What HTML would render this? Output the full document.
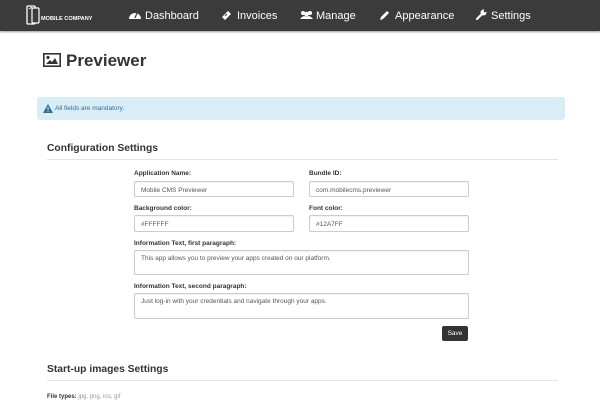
<!DOCTYPE html>
<html><head><meta charset="utf-8"><style>
*{box-sizing:border-box;margin:0;padding:0}
body{width:600px;height:400px;overflow:hidden;background:#fff;font-family:"Liberation Sans",Arial,sans-serif;color:#333;position:relative}
.nav{position:absolute;left:0;top:0;width:600px;height:31px;background:#3b3b3b;box-shadow:0 1px 2px rgba(0,0,0,.4)}
.nav span{position:absolute;top:9px;color:#fff;font-size:11px;line-height:14px}
.ab{position:absolute}
.lbl{position:absolute;font-size:6.5px;font-weight:bold;color:#333}
.in{position:absolute;border:1px solid #ccc;border-radius:2px;font-size:6.5px;color:#555;padding:5px 0 0 6px;background:#fff;box-shadow:inset 0 1px 1px rgba(0,0,0,.05)}
h2{position:absolute;left:47px;font-size:10.3px;font-weight:bold;color:#333}
.line{position:absolute;left:47px;width:511px;height:1px;background:#e5e5e5}
</style></head><body>
<div class="nav">
 <svg class="ab" style="left:26px;top:5px" width="14" height="20" viewBox="0 0 14 20"><rect x="1" y="1" width="8" height="18" rx="1" fill="none" stroke="#fff" stroke-width="1.3"/><rect x="6" y="3" width="7" height="15" rx="1" fill="#3b3b3b" stroke="#fff" stroke-width="1.2"/><path d="M3 4l3-2" stroke="#fff"/></svg>
 <span style="left:41px;top:12px;font-size:5.6px;font-weight:bold">MOBILE COMPANY</span>
 <svg class="ab" style="left:129px;top:10px" width="12" height="10" viewBox="0 0 12 10"><path d="M0 9A6 6 0 0 1 12 9Z" fill="#fff"/><path d="M6 8L8 3" stroke="#3b3b3b" stroke-width="1.2"/></svg>
 <span style="left:145px">Dashboard</span>
 <svg class="ab" style="left:221px;top:10px" width="11" height="11" viewBox="0 0 11 11"><path d="M1 7L7 1L10 4L4 10Z" fill="#fff"/><path d="M4 6L6 4" stroke="#3b3b3b"/></svg>
 <span style="left:237px">Invoices</span>
 <svg class="ab" style="left:300px;top:10px" width="13" height="10" viewBox="0 0 13 10"><circle cx="3" cy="3" r="2" fill="#fff"/><circle cx="10" cy="3" r="2" fill="#fff"/><circle cx="6.5" cy="4" r="2.3" fill="#fff"/><path d="M0 9Q3 5 6.5 6.5Q10 5 13 9Z" fill="#fff"/></svg>
 <span style="left:316px">Manage</span>
 <svg class="ab" style="left:380px;top:10px" width="10" height="10" viewBox="0 0 10 10"><path d="M0 10L1 7L7 1L9 3L3 9Z" fill="#fff"/></svg>
 <span style="left:395px">Appearance</span>
 <svg class="ab" style="left:476px;top:9px" width="11" height="11" viewBox="0 0 11 11"><path d="M1 10L6 5" stroke="#fff" stroke-width="2.2" stroke-linecap="round"/><circle cx="7.5" cy="3.5" r="3" fill="#fff"/><circle cx="9" cy="2" r="1.3" fill="#3b3b3b"/></svg>
 <span style="left:491px">Settings</span>
</div>
<svg class="ab" style="left:43px;top:53px" width="18" height="14" viewBox="0 0 18 14"><rect x="0.8" y="0.8" width="16.4" height="12.4" fill="none" stroke="#333" stroke-width="1.6"/><circle cx="5" cy="4.5" r="1.6" fill="#333"/><path d="M3 11L7 7L9 9L12 5L15 11Z" fill="#333"/></svg>
<div class="ab" style="left:66px;top:51px;font-size:17px;font-weight:bold;color:#333">Previewer</div>
<div class="ab" style="left:37px;top:97px;width:528px;height:23px;background:#d9edf7;border-radius:3px"></div>
<svg class="ab" style="left:43px;top:104px" width="10" height="9" viewBox="0 0 10 9"><path d="M5 0L10 9H0Z" fill="#31708f"/><path d="M5 3v3M5 7v1" stroke="#d9edf7"/></svg>
<div class="ab" style="left:55px;top:105px;font-size:6.5px;color:#31708f">All fields are mandatory.</div>
<h2 style="top:143px">Configuration Settings</h2>
<div class="line" style="top:159px"></div>
<div class="lbl" style="left:134px;top:170px">Application Name:</div>
<div class="lbl" style="left:309px;top:170px">Bundle ID:</div>
<div class="in" style="left:134px;top:181px;width:160px;height:16px">Mobile CMS Previewer</div>
<div class="in" style="left:309px;top:181px;width:160px;height:16px">com.mobilecms.previewer</div>
<div class="lbl" style="left:134px;top:205px">Background color:</div>
<div class="lbl" style="left:309px;top:205px">Font color:</div>
<div class="in" style="left:134px;top:215px;width:160px;height:17px">#FFFFFF</div>
<div class="in" style="left:309px;top:215px;width:160px;height:17px">#12A7FF</div>
<div class="lbl" style="left:134px;top:240px">Information Text, first paragraph:</div>
<div class="in" style="left:134px;top:250px;width:335px;height:25px;padding-top:4px">This app allows you to preview your apps created on our platform.</div>
<div class="lbl" style="left:134px;top:283px">Information Text, second paragraph:</div>
<div class="in" style="left:134px;top:293px;width:335px;height:26px;padding-top:4px">Just log-in with your credentials and navigate through your apps.</div>
<div class="ab" style="left:442px;top:326px;width:26px;height:15px;background:#333;border-radius:2px;color:#fff;font-size:6.5px;text-align:center;line-height:15px">Save</div>
<h2 style="top:364px">Start-up images Settings</h2>
<div class="line" style="top:380px"></div>
<div class="ab" style="left:47px;top:394px;font-size:6px;color:#999"><b style="color:#333">File types:</b> jpg, png, ico, gif</div>
</body></html>
